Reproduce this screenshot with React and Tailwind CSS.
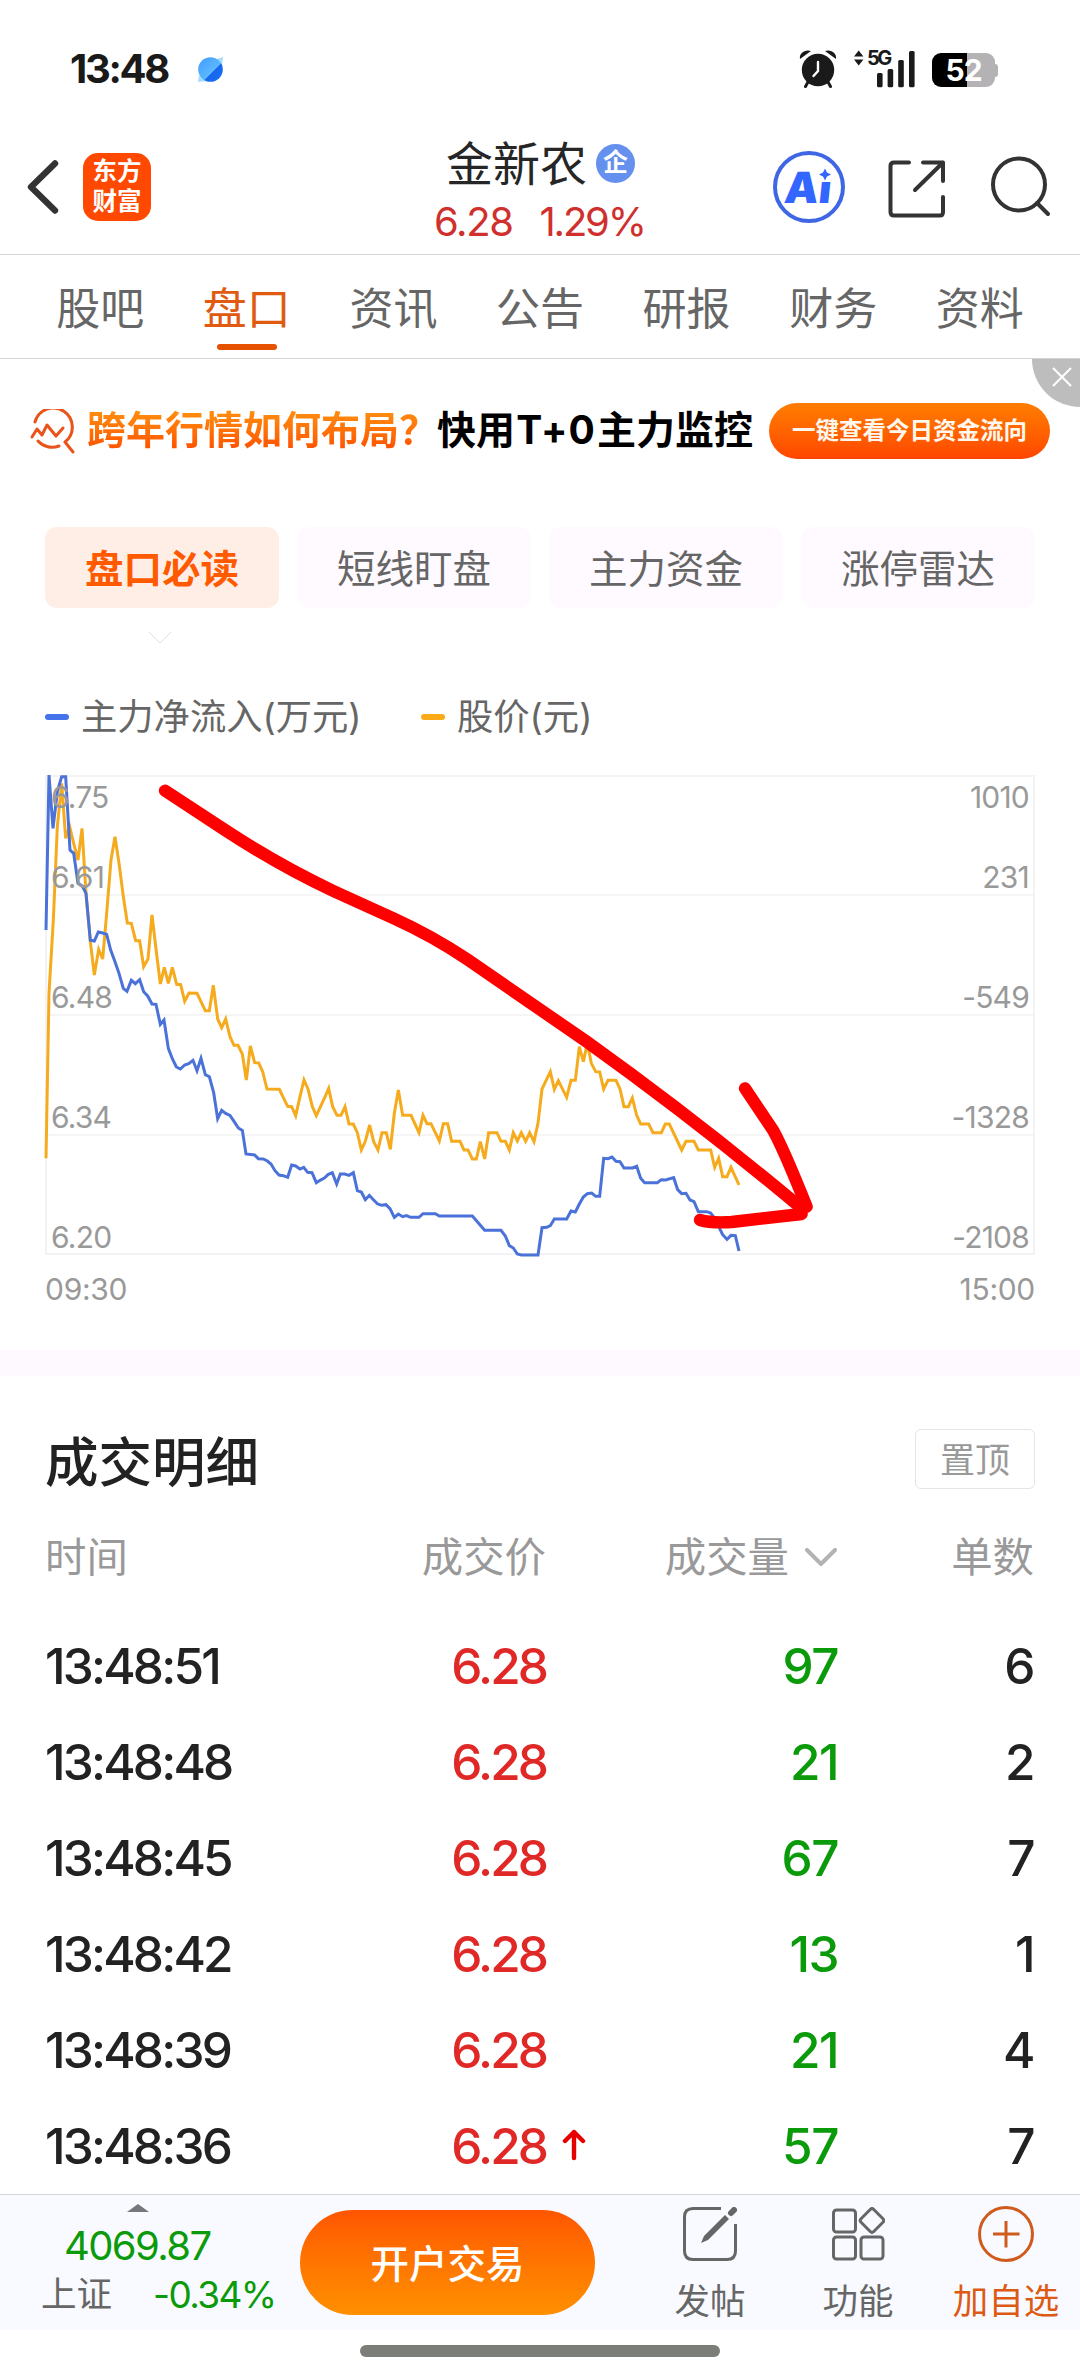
import clsx from 'clsx';

const TABS = ['股吧', '盘口', '资讯', '公告', '研报', '财务', '资料'];
const PILLS = ['盘口必读', '短线盯盘', '主力资金', '涨停雷达'];

const TRADES = [
  { time: '13:48:51', price: '6.28', volume: 97, count: 6 },
  { time: '13:48:48', price: '6.28', volume: 21, count: 2 },
  { time: '13:48:45', price: '6.28', volume: 67, count: 7 },
  { time: '13:48:42', price: '6.28', volume: 13, count: 1 },
  { time: '13:48:39', price: '6.28', volume: 21, count: 4 },
  { time: '13:48:36', price: '6.28', volume: 57, count: 7, up: true },
];

const LEVELS = [
  { price: '6.75', flow: '1010', top: 'top-[4px]' },
  { price: '6.61', flow: '231', top: 'top-[84px]' },
  { price: '6.48', flow: '-549', top: 'top-[204px]' },
  { price: '6.34', flow: '-1328', top: 'top-[324px]' },
  { price: '6.20', flow: '-2108', top: 'top-[444px]' },
];

// chart coordinates: 2967 x 1437 units
const FLOW =
  '3,465 12,0 24,160 37,50 50,5 62,5 75,225 86,235 99,325 112,333 123,355 136,496 148,498 160,471 173,474 185,478 197,525 210,560 222,595 235,640 246,649 259,616 271,626 284,614 296,650 308,663 321,687 333,688 346,748 357,735 370,820 382,851 394,876 406,882 419,870 431,866 444,856 456,887 468,850 481,899 493,905 506,953 518,1031 530,1006 542,1015 555,1021 567,1039 580,1059 592,1066 603,1137 629,1140 640,1151 655,1152 667,1158 678,1167 690,1187 702,1200 715,1202 728,1207 740,1170 752,1173 765,1182 776,1177 788,1192 801,1193 814,1223 825,1216 838,1209 850,1198 862,1193 875,1227 886,1197 899,1197 912,1201 925,1193 937,1247 949,1251 961,1274 973,1261 986,1275 998,1287 1010,1291 1023,1289 1035,1301 1048,1327 1060,1317 1073,1325 1084,1322 1097,1327 1122,1327 1134,1316 1171,1316 1183,1323 1282,1323 1319,1366 1368,1366 1381,1383 1393,1412 1405,1419 1417,1437 1429,1440 1479,1440 1491,1358 1505,1357 1516,1352 1528,1332 1565,1332 1578,1308 1591,1311 1603,1287 1615,1266 1627,1256 1640,1254 1652,1264 1664,1264 1676,1150 1689,1151 1701,1146 1713,1159 1725,1160 1737,1179 1763,1179 1775,1174 1787,1210 1799,1223 1837,1223 1849,1214 1862,1215 1886,1208 1898,1244 1910,1256 1923,1255 1935,1275 1947,1280 1960,1310 1985,1310 1997,1314 2009,1330 2021,1355 2033,1379 2046,1393 2058,1381 2071,1382 2082,1428';
const PRICE =
  '3,1150 12,655 25,435 37,155 50,25 62,190 74,155 86,205 99,255 111,160 123,355 136,500 148,600 161,523 173,552 185,415 198,255 210,185 222,265 235,365 247,444 259,445 272,497 284,497 296,575 309,552 321,420 333,522 346,627 358,577 370,625 382,577 395,628 407,629 419,679 432,654 456,655 468,680 481,707 493,707 505,631 518,732 530,758 542,732 555,785 567,811 579,811 592,837 604,915 616,813 629,863 641,864 653,890 666,942 703,943 715,968 728,994 740,995 752,1022 765,965 777,915 789,942 802,995 814,1022 839,968 851,940 863,995 876,1021 888,1021 900,995 912,1047 925,1047 937,1073 949,1125 961,1099 974,1050 986,1100 999,1125 1011,1073 1024,1073 1036,1123 1048,1015 1060,945 1073,1021 1098,1021 1122,1073 1134,1021 1146,1046 1158,1046 1183,1098 1195,1046 1208,1046 1220,1099 1245,1099 1257,1125 1269,1125 1282,1152 1294,1152 1306,1100 1319,1152 1331,1073 1356,1073 1368,1099 1381,1099 1393,1125 1405,1073 1417,1098 1429,1073 1442,1099 1454,1073 1467,1100 1479,1045 1491,942 1516,890 1528,943 1540,917 1565,967 1578,916 1591,916 1603,815 1615,860 1627,805 1639,865 1652,890 1664,891 1676,942 1689,916 1713,916 1725,942 1737,995 1750,995 1762,969 1775,1021 1787,1047 1811,1047 1824,1073 1849,1073 1861,1047 1873,1047 1910,1125 1923,1099 1947,1099 1960,1125 1997,1125 2009,1177 2021,1150 2033,1205 2046,1205 2058,1177 2082,1230';

function StatusBar() {
  return (
    <div className="h-[120px] pt-[48px] pl-[70px] pr-[82px] flex justify-between">
      <div className="flex items-center h-[42px] gap-[29px]">
        <span className="text-[40px] leading-none font-bold tracking-[-2.3px] text-[#1a1a1a]">13:48</span>
        <svg width="27" height="27" viewBox="0 0 27 27">
          <defs>
            <linearGradient id="orb" x1="0" y1="0" x2="1" y2="1">
              <stop offset="0" stopColor="#3f9bff" />
              <stop offset="0.58" stopColor="#5cb8ff" />
              <stop offset="0.6" stopColor="#1668ee" />
              <stop offset="1" stopColor="#1a70f5" />
            </linearGradient>
          </defs>
          <path d="M20 3 L26 1 L25 9 Z M2 19 L1 26 L10 25 Z" fill="#a5dcff" />
          <circle cx="13.5" cy="13.5" r="12.3" fill="url(#orb)" />
        </svg>
      </div>
      <div className="flex h-[42px]">
        <svg width="38" height="40" viewBox="0 0 38 40" fill="#1a1a1a">
          <circle cx="19" cy="22" r="16.2" />
          <path d="M1 11 C0 5 6 1 12 3 Z M37 11 C38 5 32 1 26 3 Z" />
          <path d="M9 34 L6.5 38.5 M29 34 L31.5 38.5" stroke="#1a1a1a" strokeWidth="3" strokeLinecap="round" />
          <path d="M19 14 V23 L14.5 28" fill="none" stroke="#fff" strokeWidth="2.4" strokeLinecap="round" />
        </svg>
        <div className="relative w-[62px] h-[42px] ml-[17px]">
          <svg width="62" height="42" viewBox="0 0 62 42" fill="#1a1a1a">
            <path d="M0 8.5 L4.7 2.5 L9.4 8.5 Z M0 11.5 L4.7 17.5 L9.4 11.5 Z" />
            <rect x="23" y="25" width="5.6" height="14.2" rx="1.5" />
            <rect x="33.6" y="21" width="5.6" height="18.2" rx="1.5" />
            <rect x="44.2" y="12" width="5.6" height="27.2" rx="1.5" />
            <rect x="55" y="3" width="5.6" height="36.2" rx="1.5" />
          </svg>
          <span className="absolute left-[13px] top-0 text-[20px] leading-[21px] font-bold tracking-[-2.6px] text-[#1a1a1a]">5G</span>
        </div>
        <div className="flex items-center h-[34px] mt-[5px] ml-[16px]">
          <div className="w-[63px] h-[34px] rounded-[9px] bg-[linear-gradient(90deg,#000_55%,#b5b2b5_55%)] flex items-center justify-center text-white text-[30px] leading-none font-bold tracking-[-1px]">
            52
          </div>
          <div className="w-[3px] h-[13px] rounded-r-[3px] bg-[#b5b2b5]" />
        </div>
      </div>
    </div>
  );
}

function Header() {
  return (
    <header className="h-[135px] border-b border-[#d4d4d8] flex">
      <div className="w-[385px] flex pl-[27px] pt-[33px]">
        <svg className="mt-[6px]" width="32" height="56" viewBox="0 0 32 56" fill="none" stroke="#333" strokeWidth="6.4" strokeLinecap="round" strokeLinejoin="round">
          <path d="M28 4.5 L4 28 L28 51.5" />
        </svg>
        <div className="ml-[24px] w-[68px] h-[68px] rounded-[15px] bg-[#ff4800] text-white text-[24.5px] leading-[29.5px] font-bold text-center pt-[4px]">
          东方
          <br />
          财富
        </div>
      </div>
      <div className="flex-1 pl-[61px] pt-[20px]">
        <div className="flex items-center h-[47px]">
          <span className="text-[47px] leading-none text-[#262626]">金新农</span>
          <span className="ml-[9px] w-[39px] h-[39px] rounded-full bg-[#6590ee] text-white text-[25px] font-bold leading-[37px] text-center">企</span>
        </div>
        <div className="flex -ml-[12px] mt-[15px] text-[40px] leading-none text-[#d0302d]">
          <span className="tracking-[-1.4px]">6.28</span>
          <span className="ml-[27px] tracking-[-2.2px]">1.29%</span>
        </div>
      </div>
      <div className="flex pt-[31px] pr-[27px]">
        <div className="relative w-[72px] h-[72px] rounded-full border-4 border-[#3f66e4] text-[#3366ff] flex items-center justify-center">
          <span className="text-[43px] leading-none font-black -skew-x-6 -translate-x-[1px]">Ai</span>
          <svg className="absolute left-[40px] top-[12px]" width="16" height="16" viewBox="0 0 16 16">
            <rect width="16" height="15" fill="#fff" />
            <path d="M8 1.5 L10 5.5 L14 7.5 L10 9.500 L8 13.5 L6 9.500 L2 7.5 L6 5.5 Z" fill="#3366ff" />
          </svg>
        </div>
        <svg className="ml-[42px] mt-[8px]" width="60" height="60" viewBox="0 0 60 60" fill="none" stroke="#333" strokeWidth="4" strokeLinecap="round" strokeLinejoin="round">
          <path d="M22 3.5 H7 Q3.5 3.5 3.5 7 V53 Q3.5 56.500 7 56.500 H53 Q56 56.500 56 53 V38" />
          <path d="M36 3.500 H56 V22 M56 3.500 L28 31" />
        </svg>
        <svg className="ml-[42px] mt-[4px]" width="64" height="64" viewBox="0 0 64 64" fill="none" stroke="#333" strokeWidth="4" strokeLinecap="round">
          <circle cx="30" cy="29.500" r="26" />
          <path d="M48 48 L59 59" />
        </svg>
      </div>
    </header>
  );
}

function Tabs() {
  return (
    <nav className="h-[104px] border-b border-[#d4d4d8] px-[27px] flex">
      {TABS.map((tab) => (
        <div
          key={tab}
          className={clsx(
            'flex-1 flex flex-col items-center pt-[32px] text-[44px] leading-[44px]',
            tab === '盘口' ? 'text-[#e05a10]' : 'text-[#666]'
          )}
        >
          {tab}
          {tab === '盘口' && <span className="mt-[13px] w-[60px] h-[6px] rounded-full bg-[#e65100]" />}
        </div>
      ))}
    </nav>
  );
}

function Banner() {
  return (
    <div className="relative h-[168px] pt-[44px] pl-[29px] flex items-start">
      <svg className="mt-[6px]" width="46" height="46" viewBox="0 0 46 46" fill="none" stroke="#e8541a" strokeWidth="3" strokeLinecap="round" strokeLinejoin="round">
        <path d="M6 13 A19 19 0 1 1 36 33 L44 43 M9 32 A19 19 0 0 0 30 37" />
        <path d="M3 28 L8 20 L13 26 L18 16 L27 27 L34 19" />
      </svg>
      <span className="ml-[12px] mt-[6px] w-[350px] text-[39px] leading-[42px] font-bold text-transparent bg-clip-text bg-linear-to-b from-[#ff9010] to-[#ff4d00] whitespace-nowrap">
        跨年行情如何布局？
      </span>
      <span className="mt-[6px] flex w-[332px] text-[39px] leading-[42px] font-bold text-black whitespace-nowrap">
        快用<span className="w-[82px] text-center tracking-[1px]">T+0</span>主力监控
      </span>
      <span className="w-[281px] h-[56px] rounded-full bg-linear-to-b from-[#ff7d00] to-[#ff4400] text-[#fff8ee] text-[23.5px] leading-[55px] font-bold text-center whitespace-nowrap">
        一键查看今日资金流向
      </span>
      <div className="absolute right-0 top-0 w-[48px] h-[48px] rounded-bl-full bg-[#bdbdbd]">
        <svg className="ml-[20px] mt-[8px]" width="20" height="20" viewBox="0 0 20 20" stroke="#fff" strokeWidth="2">
          <path d="M1 1 L19 19 M19 1 L1 19" />
        </svg>
      </div>
    </div>
  );
}

function Pills() {
  return (
    <div className="px-[45px]">
      <div className="grid grid-cols-4 gap-[18px]">
        {PILLS.map((pill, i) => (
          <div
            key={pill}
            className={clsx(
              'h-[81px] rounded-[12px] text-center text-[38.5px] leading-[84px]',
              i === 0 ? 'bg-[#ffeee6] text-[#ff5a00] font-bold' : 'bg-[#fefaff] text-[#666]'
            )}
          >
            {pill}
          </div>
        ))}
      </div>
      <svg className="mt-[24px] ml-[104px]" width="22" height="12" viewBox="0 0 22 12" fill="none" stroke="#e2dfe4" strokeWidth="1">
        <path d="M0 0 L11 11 L22 0" />
      </svg>
    </div>
  );
}

function Chart() {
  return (
    <section className="px-[45px] pt-[49px] h-[706px]">
      <div className="flex items-center h-[48px] text-[36.3px] leading-none text-[#666]">
        <i className="w-[24px] h-[6px] rounded-full bg-[#4473ec]" />
        <span className="ml-[12px] w-[340px]">主力净流入(万元)</span>
        <i className="w-[24px] h-[6px] rounded-full bg-[#fbab18]" />
        <span className="ml-[12px]">股价(元)</span>
      </div>
      <div className="relative mt-[34px] h-[480px] text-[30px] leading-[36px] text-[#999]">
        <svg className="block overflow-visible" width="990" height="480" viewBox="0 0 2970 1440" fill="none">
          <rect x="3" y="3" width="2964" height="1434" stroke="#f3f2f4" strokeWidth="6" />
          <path d="M3 360 H2967 M3 720 H2967 M3 1080 H2967" stroke="#f3f2f4" strokeWidth="5" />
          <polyline points={PRICE} stroke="#f5ab1d" strokeWidth="9" />
          <polyline points={FLOW} stroke="#4a72d8" strokeWidth="9" />
          <g stroke="#f00" strokeWidth="37" strokeLinecap="round" strokeLinejoin="round">
            <path d="M360 47 L540 165 Q700 270 865 348 L1050 432 Q1160 482 1267 553 L1625 800 Q1960 1040 2270 1300" />
            <path d="M2100 940 L2185 1067 Q2215 1120 2285 1295" />
            <path d="M1965 1335 Q2000 1345 2060 1341 L2270 1317" />
          </g>
        </svg>
        {LEVELS.map(({ price, flow, top }) => (
          <div key={price} className={clsx('absolute inset-x-[6px] flex justify-between tracking-[-0.8px]', top)}>
            <span>{price}</span>
            <span>{flow}</span>
          </div>
        ))}
      </div>
      <div className="mt-[16px] flex justify-between text-[30px] leading-[36px] tracking-[-0.3px] text-[#999]">
        <span>09:30</span>
        <span>15:00</span>
      </div>
    </section>
  );
}

function Trades() {
  return (
    <section className="h-[818px] overflow-hidden">
      <div className="flex justify-between px-[45px] pt-[53px]">
        <h2 className="text-[53.5px] leading-[68px] font-medium text-[#222]">成交明细</h2>
        <span className="w-[120px] h-[60px] rounded-[6px] border border-[#e5e5e5] text-center text-[35px] leading-[60px] text-[#999]">置顶</span>
      </div>
      <div className="mt-[31px] grid grid-cols-[250px_251px_292px_196px] px-[45px] h-[60px] items-center text-[41.4px] leading-none text-[#999]">
        <span>时间</span>
        <span className="text-right">成交价</span>
        <span className="flex items-center justify-end">
          成交量
          <svg className="ml-[15px]" width="34" height="20" viewBox="0 0 34 20" fill="none" stroke="#b3b3b3" strokeWidth="4" strokeLinecap="round" strokeLinejoin="round">
            <path d="M3 2 L17 16 L31 2" />
          </svg>
        </span>
        <span className="text-right">单数</span>
      </div>
      <div className="mt-[31px]">
        {TRADES.map(({ time, price, volume, count, up }) => (
          <div
            key={time}
            className="grid grid-cols-[250px_251px_292px_196px] px-[45px] h-[96px] items-center text-[49.5px] leading-none font-medium tracking-[-1.5px] text-[#222]"
          >
            <span className="tracking-[-2.8px]">{time}</span>
            <span className="relative text-right tracking-[-2.9px] text-[#e02826]">
              {price}
              {up && (
                <svg className="absolute left-[267px] top-[7px]" width="24" height="32" viewBox="0 0 24 32" fill="none" stroke="#e60000" strokeWidth="4.4" strokeLinecap="round" strokeLinejoin="round">
                  <path d="M12 29 V3 M3 12 L12 3 L21 12" />
                </svg>
              )}
            </span>
            <span className="text-right text-[#0a9a0a]">{volume}</span>
            <span className="text-right">{count}</span>
          </div>
        ))}
      </div>
    </section>
  );
}

function BottomBar() {
  return (
    <footer>
      <div className="h-[136px] border-t border-[#d4d4d8] bg-[#f8faff] flex">
        <div className="w-[300px]">
          <svg className="ml-[127px] mt-[9px]" width="22" height="8" viewBox="0 0 22 8">
            <path d="M0 8 L11 0 L22 8 Z" fill="#77777b" />
          </svg>
          <div className="mt-[14px] ml-[64px] text-[40px] leading-[40px] tracking-[-1.6px] text-[#0a9a0a]">4069.87</div>
          <div className="mt-[8px] ml-[41px] flex items-center leading-[42px]">
            <span className="w-[112px] text-[35.5px] text-[#666]">上证</span>
            <span className="text-[37px] tracking-[-1.6px] text-[#0a9a0a]">-0.34%</span>
          </div>
        </div>
        <div className="mt-[15px] w-[295px] h-[105px] rounded-full bg-linear-to-b from-[#ff5500] to-[#ff9000] text-white text-[38.5px] leading-[109px] font-medium text-center">
          开户交易
        </div>
        <div className="ml-[41px] flex text-[35.5px] leading-[40px] text-[#666]">
          <div className="w-[148px] flex flex-col items-center pt-[12px]">
            <svg width="54" height="54" viewBox="0 0 54 54" fill="none" stroke="#666" strokeWidth="3">
              <path d="M38 1.500 H10 Q1.500 1.500 1.500 10 V44 Q1.500 52.500 10 52.500 H44 Q52.500 52.500 52.500 44 V17" />
              <path d="M18 36 L21 29 L42 8 L46 12 L25 33 Z" fill="#666" stroke="none" />
              <path d="M48 6 L51 3" strokeWidth="6" strokeLinecap="round" />
            </svg>
            <span className="mt-[21px]">发帖</span>
          </div>
          <div className="w-[148px] flex flex-col items-center pt-[12px]">
            <svg width="54" height="54" viewBox="0 0 54 54" fill="none" stroke="#666" strokeWidth="3">
              <rect x="2.500" y="3" width="22" height="22" rx="3" />
              <rect x="2.500" y="30" width="22" height="22" rx="3" />
              <rect x="30" y="30" width="22" height="22" rx="3" />
              <rect x="32" y="4.500" width="18" height="18" rx="2.500" transform="rotate(45 41 13.500)" />
            </svg>
            <span className="mt-[21px]">功能</span>
          </div>
          <div className="w-[148px] flex flex-col items-center pt-[11px] text-[#dc5a14]">
            <svg width="56" height="56" viewBox="0 0 56 56" fill="none" stroke="#d05a1c" strokeWidth="3">
              <circle cx="28" cy="28" r="26.500" />
              <path d="M28 15 V41.500 M15 28 H41.500" />
            </svg>
            <span className="mt-[20px]">加自选</span>
          </div>
        </div>
      </div>
      <div className="h-[48px] pt-[15px]">
        <div className="mx-auto w-[360px] h-[12px] rounded-full bg-[#7b7d79]" />
      </div>
    </footer>
  );
}

export default function App() {
  return (
    <div className="w-[1080px] h-[2378px] overflow-hidden bg-white font-['Inter','Noto_Sans_CJK_SC',sans-serif]">
      <StatusBar />
      <Header />
      <Tabs />
      <Banner />
      <Pills />
      <Chart />
      <div className="h-[26px] bg-[#fdf9ff]" />
      <Trades />
      <BottomBar />
    </div>
  );
}
